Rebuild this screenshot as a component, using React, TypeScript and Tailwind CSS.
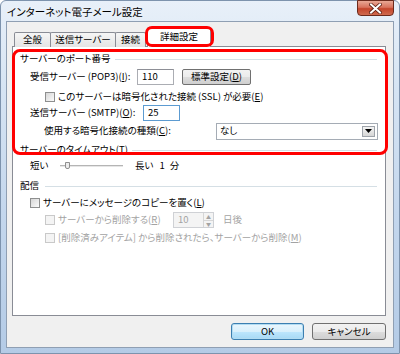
import React from 'react';

const jp = "font-['Noto_Sans_CJK_JP','Noto_Sans_CJK_SC',sans-serif] [font-feature-settings:'palt']";

function Checkbox({ disabled = false }: { disabled?: boolean }) {
  return (
    <span
      className={`inline-block w-[10px] h-[10px] shrink-0 border ${
        disabled
          ? 'border-[#c9c9c9] bg-[#f4f4f4]'
          : 'border-[#8e8f8f] bg-gradient-to-br from-[#d6d6d6] to-[#fbfbfb]'
      }`}
    />
  );
}

function GroupHeader({ children, lineGap = 4 }: { children: React.ReactNode; lineGap?: number }) {
  return (
    <div className="flex items-center h-[16px] pl-[7px] pr-[8px]">
      <span className="whitespace-nowrap">{children}</span>
      <div className={`flex-1 h-px bg-[#d5dfe5] ${lineGap === 4 ? 'ml-[4px]' : 'ml-[6px]'}`} />
    </div>
  );
}

function Key({ k }: { k: string }) {
  return (
    <>
      (<span className="underline">{k}</span>)
    </>
  );
}

function Tab({ label, width }: { label: string; width: string }) {
  return (
    <div
      className={`${width} h-[15px] flex items-center justify-center border border-[#898c95] border-b-0 -ml-px first:ml-0 rounded-t-[2px] bg-gradient-to-b from-[#f6f6f6] to-[#e4e4e4]`}
    >
      {label}
    </div>
  );
}

export default function App() {
  return (
    <div className={`w-[400px] h-[354px] overflow-hidden text-[9.5px] leading-none text-black ${jp}`}>
      <div className="relative w-[400px] h-[354px] bg-[linear-gradient(to_bottom,#e8f0f9_0%,#d6e4f3_25%,#c4d7ed_60%,#b4cbe6_100%)] border border-[#7d93ad] rounded-t-[6px]">
        {/* title bar */}
        <div className="h-[20px] flex items-start justify-between pl-[6px]">
          <span className="mt-[6px] text-[10.5px] [text-shadow:0_0_6px_#ffffff]">
            インターネット電子メール設定
          </span>
          <div className="mr-[5px] w-[37px] h-[16px] -mt-px rounded-b-[4px] border border-[#6b2a1c] bg-[linear-gradient(to_bottom,#e9a895_0%,#d8735d_45%,#c4452b_55%,#cf6a4f_100%)] flex items-center justify-center">
            <svg width="13" height="11" viewBox="0 0 13 11">
              <path d="M2 1.5 L11 9.5 M11 1.5 L2 9.5" stroke="#5a1e12" strokeWidth="3.6" strokeLinecap="square" />
              <path d="M2 1.5 L11 9.5 M11 1.5 L2 9.5" stroke="#ffffff" strokeWidth="2" strokeLinecap="square" />
            </svg>
          </div>
        </div>

        {/* client area */}
        <div className="relative ml-[5px] w-[388px] h-[327px] border border-[#8f9fb3] bg-[#f0f0f0] pt-[6px] pl-[5px] pr-[6px]">
          {/* tabs */}
          <div className="flex items-end h-[19px] pl-[2px] relative z-10 -mb-px">
            <Tab label="全般" width="w-[37px]" />
            <Tab label="送信サーバー" width="w-[66px]" />
            <Tab label="接続" width="w-[31px]" />
            <div className="ml-px w-[64px] h-[20px] flex items-center justify-center pb-[2px] border border-[#898c95] border-b-0 rounded-t-[2px] bg-white">
              詳細設定
            </div>
          </div>

          {/* panel */}
          <div className="w-[374px] h-[270px] border border-[#898c95] bg-white">
            <div className="mt-[4px]">
              <GroupHeader>サーバーのポート番号</GroupHeader>
            </div>

            <div className="mt-px flex items-center h-[18px] pl-[17px]">
              <span className="w-[107px]">
                受信サーバー (POP3)<Key k="I" />:
              </span>
              <div className="w-[37px] h-[16px] border border-[#abadb3] border-t-[#8d8f96] flex items-center pl-[4px]">110</div>
              <button className="ml-[8px] w-[69px] h-[16px] rounded-[2px] border border-[#707070] bg-[linear-gradient(to_bottom,#f2f2f2_0%,#ebebeb_50%,#dddddd_51%,#cfcfcf_100%)] flex items-center justify-center">
                標準設定<Key k="D" />
              </button>
            </div>

            <div className="mt-[2px] flex items-center h-[17px] pl-[32px] gap-[3px]">
              <Checkbox />
              <span>
                このサーバーは暗号化された接続 (SSL) が必要<Key k="E" />
              </span>
            </div>

            <div className="flex items-center h-[16px] pl-[17px]">
              <span className="w-[113px]">
                送信サーバー (SMTP)<Key k="O" />:
              </span>
              <div className="w-[37px] h-[16px] border border-[#5c9bd1] flex items-center pl-[4px]">25</div>
            </div>

            <div className="mt-px flex items-center h-[18px] pl-[31px]">
              <span className="w-[172px]">
                使用する暗号化接続の種類<Key k="C" />:
              </span>
              <div className="w-[162px] h-[17px] border border-[#a5acb5] flex items-center justify-between pl-[3px] pr-[2px]">
                <span>なし</span>
                <div className="w-[13px] h-[11px] border border-[#9ea3aa] bg-gradient-to-b from-[#f4f4f4] to-[#d6d6d6] flex items-center justify-center">
                  <svg width="7" height="4" viewBox="0 0 7 4">
                    <path d="M0 0 H7 L3.5 4 Z" fill="#000" />
                  </svg>
                </div>
              </div>
            </div>

            <div className="mt-[2px]">
              <GroupHeader>
                サーバーのタイムアウト<Key k="T" />
              </GroupHeader>
            </div>

            <div className="flex items-center h-[16px] pl-[17px]">
              <span className="w-[30px]">短い</span>
              <div className="relative w-[63px] h-[8px] flex items-center">
                <div className="w-full h-[2px] border-t border-[#b5b5b5] border-b border-b-[#e6e6e6]" />
                <div className="absolute left-[5px] top-0 w-[5px] h-[7px] border border-[#8f8f8f] bg-[#ececec] rounded-b-[2px]" />
              </div>
              <span className="ml-[12px]">長い</span>
              <span className="ml-[6px]">1</span>
              <span className="ml-[5px]">分</span>
            </div>

            <div className="mt-[4px]">
              <GroupHeader lineGap={6}>配信</GroupHeader>
            </div>

            <div className="mt-px flex items-center h-[16px] pl-[17px] gap-[3px]">
              <Checkbox />
              <span>
                サーバーにメッセージのコピーを置く<Key k="L" />
              </span>
            </div>

            <div className="flex items-center h-[18px] pl-[32px] gap-[3px] text-[#a3a3a3]">
              <Checkbox disabled />
              <span className="w-[112px]">
                サーバーから削除する<Key k="R" />
              </span>
              <div className="w-[41px] h-[16px] border border-[#cfd1d5] bg-[#f4f4f4] flex items-center justify-between pl-[4px]">
                <span>10</span>
                <div className="w-[10px] h-full border-l border-[#d6d6d6] flex flex-col">
                  <div className="flex-1 flex items-center justify-center border-b border-[#d6d6d6] text-[5px]">▲</div>
                  <div className="flex-1 flex items-center justify-center text-[5px]">▼</div>
                </div>
              </div>
              <span className="ml-[6px]">日後</span>
            </div>

            <div className="mt-px flex items-center h-[16px] pl-[32px] gap-[3px] text-[#a3a3a3]">
              <Checkbox disabled />
              <span>
                [削除済みアイテム] から削除されたら、サーバーから削除<Key k="M" />
              </span>
            </div>
          </div>

          {/* buttons */}
          <div className="mt-[7px] flex justify-end gap-[8px] pr-px">
            <button className="w-[73px] h-[17px] rounded-[3px] border border-[#3c7fb1] bg-[linear-gradient(to_bottom,#eaf6fd_0%,#d9f0fc_50%,#bee6fd_51%,#a7d9f5_100%)] shadow-[inset_0_0_0_1px_#b3dcf2] flex items-center justify-center">
              OK
            </button>
            <button className="w-[74px] h-[17px] rounded-[3px] border border-[#707070] bg-[linear-gradient(to_bottom,#f2f2f2_0%,#ebebeb_50%,#dddddd_51%,#cfcfcf_100%)] flex items-center justify-center">
              キャンセル
            </button>
          </div>

          {/* red highlight marks */}
          <div className="absolute left-[138px] top-[4px] w-[69px] h-[21px] border-[3px] border-[#ff0000] rounded-[7px] z-20 pointer-events-none" />
          <div className="absolute left-[5px] top-[27px] w-[376px] h-[106px] border-[3px] border-[#ff0000] rounded-[8px] z-20 pointer-events-none" />
        </div>
      </div>
    </div>
  );
}
